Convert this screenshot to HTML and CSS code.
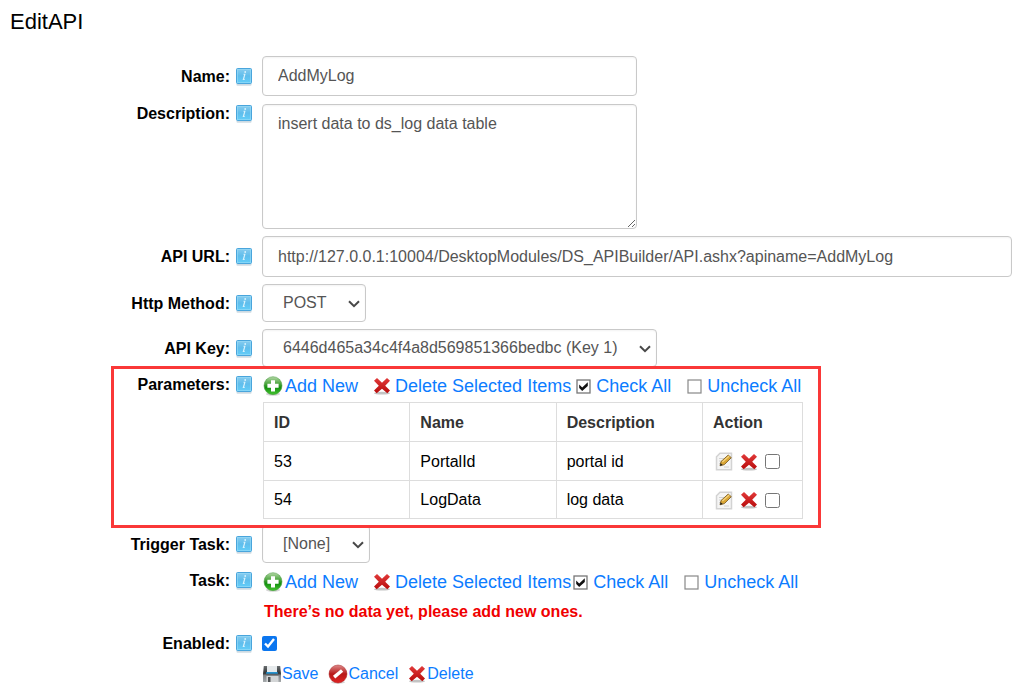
FILE: index.html
```html
<!DOCTYPE html>
<html lang="en">
<head>
<meta charset="utf-8">
<title>EditAPI</title>
<link rel="stylesheet" href="styles.css">
</head>
<body>
<svg class="defs" width="0" height="0" aria-hidden="true">
  <defs>
    <linearGradient id="blue" x1="0" y1="0" x2="0" y2="1"><stop offset="0" stop-color="#8acdef"/><stop offset=".5" stop-color="#5fbdec"/><stop offset="1" stop-color="#62cffa"/></linearGradient>
    <linearGradient id="green" x1="0" y1="0" x2="0" y2="1"><stop offset="0" stop-color="#b5d8a8"/><stop offset=".4" stop-color="#4aa43c"/><stop offset=".6" stop-color="#159010"/><stop offset="1" stop-color="#45c530"/></linearGradient>
    <linearGradient id="red" x1="0" y1="0" x2="0" y2="1"><stop offset="0" stop-color="#e23a3a"/><stop offset="1" stop-color="#b80c0c"/></linearGradient>
    <linearGradient id="ball" x1="0" y1="0" x2="0" y2="1"><stop offset="0" stop-color="#dc8a8a"/><stop offset=".5" stop-color="#b81818"/><stop offset="1" stop-color="#e02424"/></linearGradient>
    <linearGradient id="steel" x1="0" y1="0" x2="0" y2="1"><stop offset="0" stop-color="#6a6e70"/><stop offset=".45" stop-color="#303335"/><stop offset=".6" stop-color="#85898c"/><stop offset="1" stop-color="#a6aaac"/></linearGradient>
  </defs>
  <symbol id="info" viewBox="0 0 18 20">
    <rect x="1.5" y="16" width="15" height="2.8" rx="1" fill="#b9cbd6" opacity=".7"/>
    <rect x="1.5" y="1.5" width="15" height="15" rx="1" fill="url(#blue)" stroke="#49a5dc"/>
    <rect x="2.5" y="2.5" width="13" height="13" fill="none" stroke="#9bdcf7" opacity=".6"/>
    <path d="M8.6 7.4h1.2L8.4 12.5h1.3" fill="none" stroke="#d9f2fd" stroke-width="1.2"/><circle cx="10.2" cy="5" r=".9" fill="#d9f2fd"/>
  </symbol>
  <symbol id="add" viewBox="0 0 20 20">
    <ellipse cx="10" cy="18" rx="7" ry="1.7" fill="#999" opacity=".4"/>
    <circle cx="10" cy="9.7" r="9" fill="url(#green)" stroke="#3b9232" stroke-width=".5"/>
    <path d="M8 4.2h4v3.6h3.6v4H12v3.6H8v-3.6H4.4v-4H8z" fill="#fff"/>
  </symbol>
  <symbol id="cross" viewBox="0 0 18 18">
    <ellipse cx="9" cy="16.2" rx="8" ry="1.4" fill="#888" opacity=".5"/>
    <path d="M1 3.8 4 1l5 4.8L14 1l3 2.8L12.2 8.8l4.8 4.8-2.7 2.6L9 11.8l-5.3 4.4L1 13.6l4.8-4.8z" fill="url(#red)"/>
  </symbol>
  <symbol id="checked" viewBox="0 0 15 15">
    <rect x="1" y="1" width="13" height="13" fill="#fff" stroke="#777" stroke-width="1.3"/>
    <path d="m3.2 5.6 3 2.9 5.6-5.3v3.9l-5.6 5-3-3z" fill="#111"/>
  </symbol>
  <symbol id="unchecked" viewBox="0 0 15 15"><rect x="1" y="1" width="13" height="13" fill="#fff" stroke="#888" stroke-width="1.2"/></symbol>
  <symbol id="edit" viewBox="0 0 18 19">
    <path d="M5 1.2h11.5v16.5h-15V4.8z" fill="#f5f5f5" stroke="#d3d3d3" stroke-width="1.5"/>
    <path d="M4 6.5h6M4 9h4M4 11.5h2M9 15h5" stroke="#d2d2d2"/>
    <path d="m5 13.8 1-4.2 7.2-6.5 3.1 2.6L9.4 12.6z" fill="#d9a534" stroke="#806127" stroke-width=".9"/>
    <path d="m7.3 10 6.9-6" stroke="#f5d47e" stroke-width="1.3"/><path d="m5 13.8.7-2.6 2 1.8z" fill="#222"/>
  </symbol>
  <symbol id="save" viewBox="0 0 20 18">
    <path d="M1.8 1H5v5h10V1h3.2l.8 8v8H1V9z" fill="url(#steel)"/>
    <path d="M5 1h10v6H5z" fill="#e6eaec"/><path d="M4.5 7h11l.5 1.7H4z" fill="#2793cf"/>
    <path d="M4.5 11h12v6h-12z" fill="#d3d5d6"/><path d="M6 12h2.5v5H6z" fill="#505355"/>
  </symbol>
  <symbol id="cancel" viewBox="0 0 20 20">
    <ellipse cx="10" cy="18.2" rx="7" ry="1.5" fill="#999" opacity=".4"/>
    <circle cx="10" cy="10" r="9" fill="url(#ball)" stroke="#a82020" stroke-width=".5"/>
    <path d="m5 11.8 8-6.6 2.2 2.6-8 6.6z" fill="#fff"/>
  </symbol>
  <symbol id="chevron" viewBox="0 0 12 8"><path d="m1 1.2 5 5 5-5" fill="none" stroke="#484848" stroke-width="2"/></symbol>
</svg>
<main class="page">
  <h1 class="title">EditAPI</h1>
  <form class="form">
    <div class="row row-name"><div class="label"><label for="name">Name:</label><svg class="info"><use href="#info"/></svg></div>
      <input class="field medium" id="name" type="text" value="AddMyLog"></div>
    <div class="row row-top"><div class="label"><label for="desc">Description:</label><svg class="info"><use href="#info"/></svg></div>
      <textarea class="field medium area" id="desc">insert data to ds_log data table</textarea></div>
    <div class="row"><div class="label"><label for="url">API URL:</label><svg class="info"><use href="#info"/></svg></div>
      <input class="field" id="url" type="text" value="http://127.0.0.1:10004/DesktopModules/DS_APIBuilder/API.ashx?apiname=AddMyLog"></div>
    <div class="row"><div class="label"><label for="method">Http Method:</label><svg class="info"><use href="#info"/></svg></div>
      <div class="picker"><select class="field select" id="method"><option>POST</option></select><svg class="chevron"><use href="#chevron"/></svg></div></div>
    <div class="row"><div class="label"><label for="key">API Key:</label><svg class="info"><use href="#info"/></svg></div>
      <div class="picker"><select class="field select" id="key"><option>6446d465a34c4f4a8d569851366bedbc (Key 1)</option></select><svg class="chevron"><use href="#chevron"/></svg></div></div>
    <div class="row row-top params"><div class="label"><span>Parameters:</span><svg class="info"><use href="#info"/></svg></div>
      <div class="content">
        <div class="tools">
          <a href="#"><svg class="add"><use href="#add"/></svg>Add New</a>
          <a class="remove" href="#"><svg class="cross"><use href="#cross"/></svg>Delete Selected Items</a>
          <a class="check gap" href="#"><svg class="box"><use href="#checked"/></svg>Check All</a>
          <a class="check spaced" href="#"><svg class="box"><use href="#unchecked"/></svg>Uncheck All</a>
        </div>
        <table class="grid">
          <thead><tr><th>ID</th><th>Name</th><th>Description</th><th class="action">Action</th></tr></thead>
          <tbody>
            <tr><td>53</td><td>PortalId</td><td>portal id</td><td><div class="acts"><a href="#" aria-label="Edit 53"><svg class="edit"><use href="#edit"/></svg></a><a href="#" aria-label="Delete 53"><svg class="cross"><use href="#cross"/></svg></a><input class="tick" type="checkbox" aria-label="Select 53"></div></td></tr>
            <tr><td>54</td><td>LogData</td><td>log data</td><td><div class="acts"><a href="#" aria-label="Edit 54"><svg class="edit"><use href="#edit"/></svg></a><a href="#" aria-label="Delete 54"><svg class="cross"><use href="#cross"/></svg></a><input class="tick" type="checkbox" aria-label="Select 54"></div></td></tr>
          </tbody>
        </table>
      </div>
      <div class="highlight"></div></div>
    <div class="row"><div class="label"><label for="trigger">Trigger Task:</label><svg class="info"><use href="#info"/></svg></div>
      <div class="picker"><select class="field select" id="trigger"><option>[None]</option></select><svg class="chevron"><use href="#chevron"/></svg></div></div>
    <div class="row row-top"><div class="label"><span>Task:</span><svg class="info"><use href="#info"/></svg></div>
      <div class="content">
        <div class="tools">
          <a href="#"><svg class="add"><use href="#add"/></svg>Add New</a>
          <a class="remove" href="#"><svg class="cross"><use href="#cross"/></svg>Delete Selected Items</a>
          <a class="check" href="#"><svg class="box"><use href="#checked"/></svg>Check All</a>
          <a class="check spaced" href="#"><svg class="box"><use href="#unchecked"/></svg>Uncheck All</a>
        </div>
        <p class="empty">There’s no data yet, please add new ones.</p>
      </div></div>
    <div class="row row-enabled"><div class="label"><label for="enabled">Enabled:</label><svg class="info"><use href="#info"/></svg></div>
      <input class="tick" id="enabled" type="checkbox" checked></div>
    <div class="row"><span></span>
      <div class="commands"><a href="#"><svg class="save"><use href="#save"/></svg>Save</a><a href="#"><svg class="add"><use href="#cancel"/></svg>Cancel</a><a class="last" href="#"><svg class="cross"><use href="#cross"/></svg>Delete</a></div></div>
  </form>
</main>
</body>
</html>
```
FILE: styles.css
```css
* { box-sizing: border-box; }
body { margin: 0; background: #fff; color: #000; font: 16px/20px "Liberation Sans", Arial, sans-serif; }
svg { display: block; flex: none; }
a { color: #0c7cff; text-decoration: none; }
.defs { position: absolute; }
.page { padding: 8px 16px 12px 0; }
.title { margin: 0 0 20px; padding-left: 10px; font-size: 22px; line-height: 28px; font-weight: 400; }
.form { display: flex; flex-direction: column; gap: 7px; }
.row { display: grid; grid-template-columns: 253px minmax(0, 1fr); column-gap: 9px; align-items: center; }
.row-top { align-items: start; }
.label { display: flex; justify-content: flex-end; align-items: center; gap: 5px; padding-top: 1px; font-weight: 700; }
.info { width: 18px; height: 20px; }
.field { width: 100%; height: 41px; padding: 0 15px; border: 1px solid #c9c9c9; border-radius: 4px; background: #fff; color: #555; font: inherit; box-shadow: inset 0 1px 2px #0000000d; }
.medium { width: 375px; max-width: 100%; }
.row-name .field { height: 40px; }
.area { height: 125px; padding: 9px 15px; display: block; margin-top: 1px; resize: both; }
.picker { position: relative; justify-self: start; max-width: 100%; }
.select { display: block; appearance: none; height: 38px; padding: 0 38px 0 20px; }
.chevron { position: absolute; right: 6px; top: 16px; width: 12px; height: 8px; pointer-events: none; }
.content { padding-left: 1px; min-width: 0; }
.tools { display: flex; align-items: center; height: 24px; font-size: 18px; white-space: nowrap; }
.tools a { display: flex; align-items: center; gap: 2px; }
.tools .remove { margin-left: 15px; gap: 4px; }
.tools .check { margin-left: 2px; gap: 5px; }
.tools .gap { margin-left: 5px; }
.tools .spaced { margin-left: 16px; }
.add { width: 20px; height: 20px; }
.cross { width: 18px; height: 18px; }
.box { width: 15px; height: 15px; }
.params { position: relative; margin-bottom: -1px; }
.highlight { position: absolute; left: 111px; top: -8px; bottom: -9px; width: 710px; border: 3px solid #fa3838; pointer-events: none; z-index: 1; }
.grid { width: 540px; margin-top: 4px; border-collapse: collapse; table-layout: fixed; }
.grid th, .grid td { height: 39px; padding: 1px 10px 0; border: 1px solid #ddd; text-align: left; }
.grid th { color: #333; }
.grid tr:last-child td { height: 38px; }
.grid .action { width: 100px; }
.acts { display: flex; align-items: center; gap: 7px; padding-left: 2px; }
.edit { width: 18px; height: 19px; }
.tick { display: block; width: 15px; height: 15px; margin: 0; }
.row > .tick { accent-color: #0b76ef; }
.empty { margin: 8px 0 0 1px; color: #f00000; font-weight: 700; }
.row-enabled { margin-top: 4px; }
.commands { display: flex; gap: 10px; margin-top: 3px; }
.commands a { display: flex; align-items: center; }
.commands .last { gap: 1px; }
.save { width: 20px; height: 18px; }
```
